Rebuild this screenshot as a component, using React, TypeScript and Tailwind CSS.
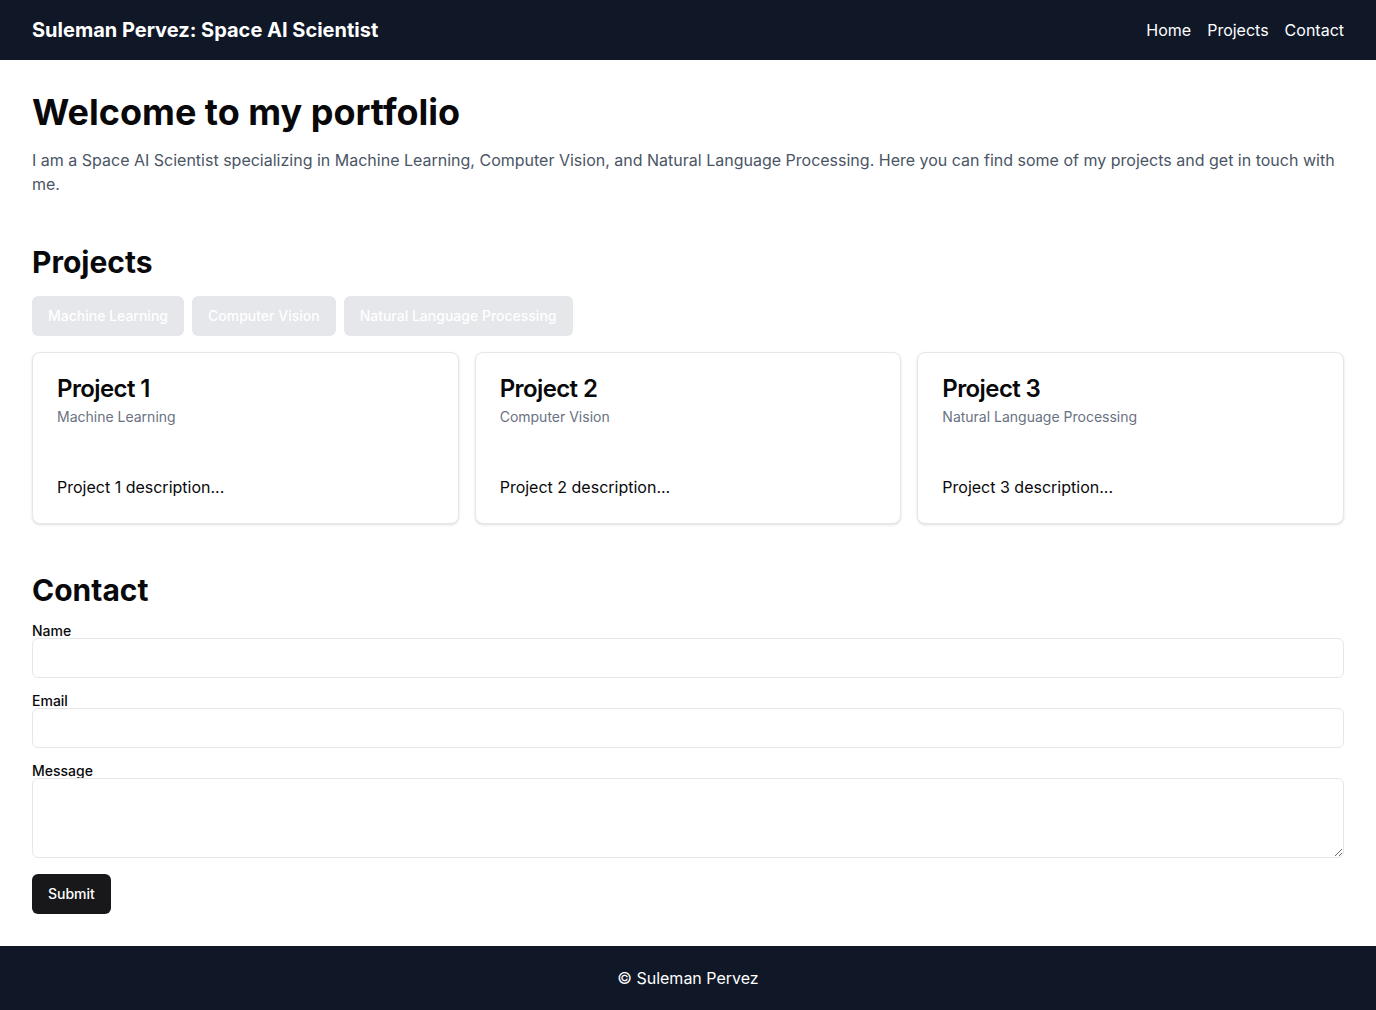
const categories = ['Machine Learning', 'Computer Vision', 'Natural Language Processing'];

const projects = [
  { id: 1, title: 'Project 1', category: 'Machine Learning', description: 'Project 1 description...' },
  { id: 2, title: 'Project 2', category: 'Computer Vision', description: 'Project 2 description...' },
  { id: 3, title: 'Project 3', category: 'Natural Language Processing', description: 'Project 3 description...' },
];

function App() {
  return (
    <div className="min-h-screen bg-white text-[#09090b]" style={{ fontFamily: 'Inter, "Noto Sans", sans-serif' }}>
      <header className="bg-gray-900 text-white px-8 py-4 flex items-center justify-between">
        <h1 className="text-xl font-bold">Suleman Pervez: Space AI Scientist</h1>
        <nav className="flex gap-4 text-base">
          <a href="#">Home</a>
          <a href="#projects">Projects</a>
          <a href="#contact">Contact</a>
        </nav>
      </header>

      <main className="px-8 py-8">
        <section>
          <h2 className="text-4xl font-bold">Welcome to my portfolio</h2>
          <p className="mt-4 text-base text-gray-600">
            I am a Space AI Scientist specializing in Machine Learning, Computer Vision, and Natural Language Processing. Here you can find some of my projects and get in touch with me.
          </p>
        </section>

        {/* Projects */}
        <section id="projects" className="mt-12">
          <h2 className="text-3xl font-bold mb-4">Projects</h2>
          <div className="flex gap-2">
            {categories.map((c) => (
              <button
                key={c}
                disabled
                className="h-10 px-4 rounded-md bg-[#e5e7eb] text-white text-sm font-medium"
              >
                {c}
              </button>
            ))}
          </div>
          <div className="grid grid-cols-3 gap-4 mt-4">
            {projects.map((p) => (
              <div key={p.id} className="rounded-lg border border-gray-200 bg-white shadow-sm">
                <div className="p-6 flex flex-col gap-1.5">
                  <h3 className="text-2xl font-semibold leading-none tracking-tight">{p.title}</h3>
                  <p className="text-sm text-gray-500">{p.category}</p>
                </div>
                <div className="p-6">
                  <p className="text-base">{p.description}</p>
                </div>
              </div>
            ))}
          </div>
        </section>

        {/* Contact */}
        <section id="contact" className="mt-12">
          <h2 className="text-3xl font-bold mb-4">Contact</h2>
          <form className="flex flex-col" onSubmit={(e) => e.preventDefault()}>
            <label className="text-sm font-medium leading-none">Name</label>
            <input className="h-10 w-full rounded-md border border-gray-200 px-3 text-sm mb-4" />
            <label className="text-sm font-medium leading-none">Email</label>
            <input type="email" className="h-10 w-full rounded-md border border-gray-200 px-3 text-sm mb-4" />
            <label className="text-sm font-medium leading-none">Message</label>
            <textarea className="block h-20 w-full rounded-md border border-gray-200 px-3 py-2 text-sm" />
            <div className="mt-4">
              <button type="submit" className="h-10 px-4 rounded-md bg-[#18181b] text-white text-sm font-medium">
                Submit
              </button>
            </div>
          </form>
        </section>
      </main>

      <footer className="bg-gray-900 text-white py-5 text-center text-base">
        © Suleman Pervez
      </footer>
    </div>
  );
}

export default App;
